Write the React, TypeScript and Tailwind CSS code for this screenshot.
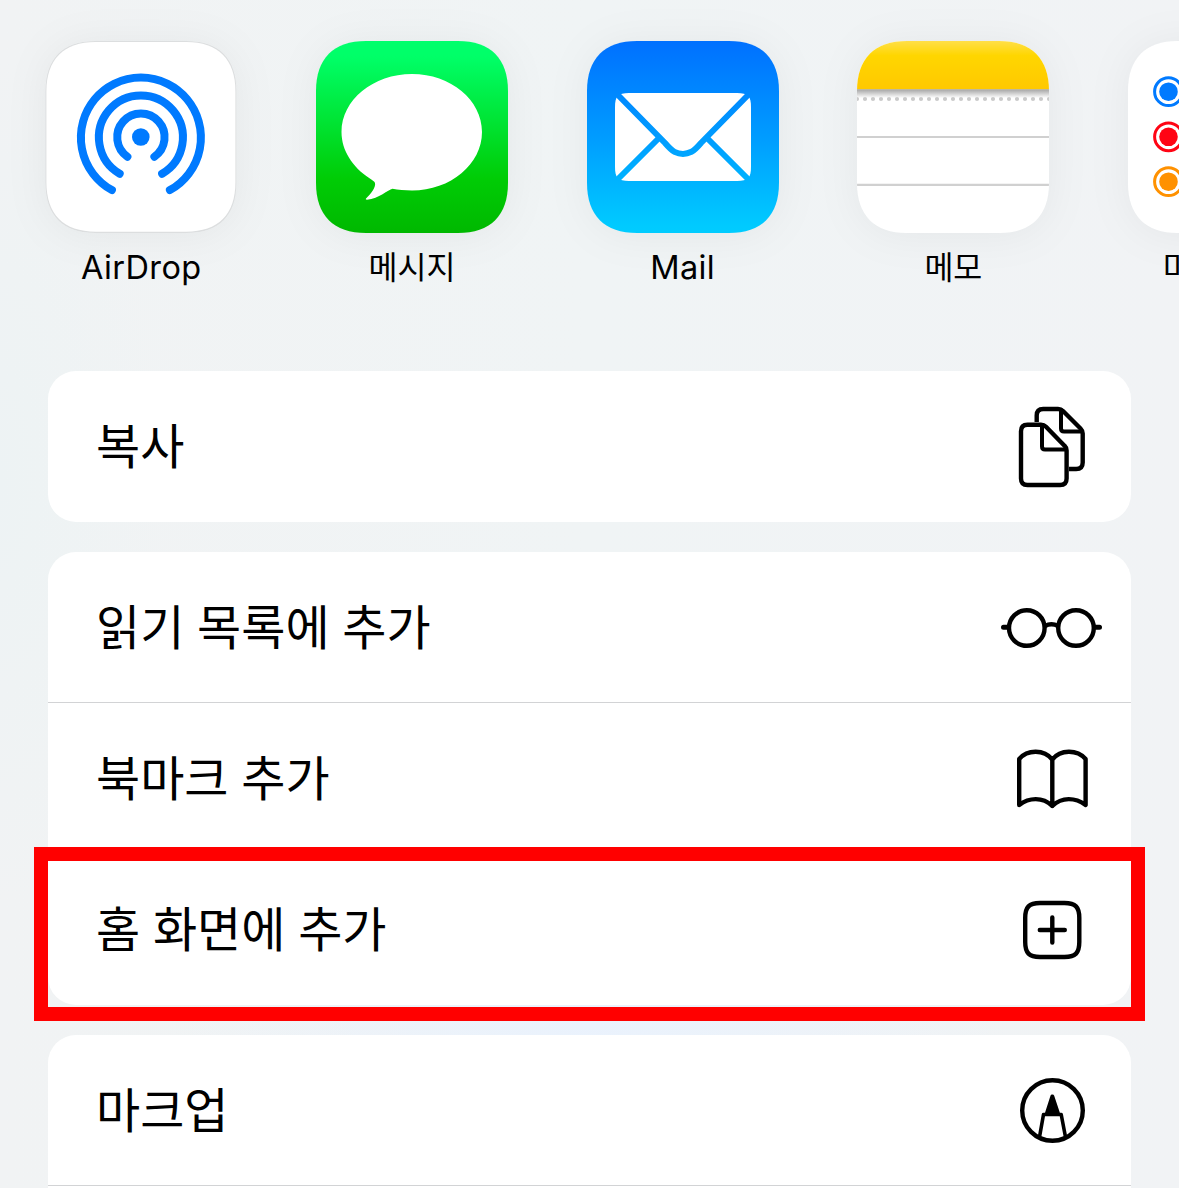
import type { ReactNode } from "react";

const TILE =
  "M0 50C0 17.500 17.500 0 50 0H142C174.500 0 192 17.500 192 50V142C192 174.500 174.500 192 142 192H50C17.500 192 0 174.500 0 142Z";

function Tile({ id, children }: { id: string; children: ReactNode }) {
  return (
    <svg
      width="192"
      height="192"
      viewBox="0 0 192 192"
      className="block overflow-visible drop-shadow-[0_2px_20px_rgba(0,0,0,0.05)]"
    >
      <defs>
        <clipPath id={`${id}-clip`}>
          <path d={TILE} />
        </clipPath>
      </defs>
      <g clipPath={`url(#${id}-clip)`}>{children}</g>
    </svg>
  );
}

function AirDropIcon() {
  return (
    <Tile id="airdrop">
      <path d={TILE} fill="#dcdedf" transform="translate(.5 0) scale(.994 1)" />
      <path d={TILE} fill="#fff" transform="translate(1.400 1) scale(.9845 .9885)" />
      <g fill="none" stroke="#007aff" strokeWidth="8" strokeLinecap="round">
        <path d="M66.900 149.100A60 60 0 1 1 124.900 149.100" />
        <path d="M74.700 132.700A42 42 0 1 1 117.100 132.700" />
        <path d="M82.400 115.700A23.700 23.700 0 1 1 109.400 115.700" />
      </g>
      <circle cx="95.800" cy="96" r="8.800" fill="#007aff" />
    </Tile>
  );
}

function MessagesIcon() {
  return (
    <Tile id="messages">
      <linearGradient id="messages-fill" x1="0" y1="0" x2="0" y2="1">
        <stop offset="0" stopColor="#00ff6c" />
        <stop offset=".08" stopColor="#00ff68" />
        <stop offset=".72" stopColor="#00cc05" />
        <stop offset="1" stopColor="#00b800" />
      </linearGradient>
      <rect width="192" height="192" fill="url(#messages-fill)" />
      <path
        d="M96 33C134.700 33 166 59 166 91S134.700 149.500 96 149.500C89 149.500 82 148.800 76.500 147.800C72 148.500 63 158 51 158.700C49.500 158.700 49.500 157.800 50.500 157C55 153 60 146 59 142C58.500 140.500 56 139 53.500 137.300C36.500 126 25.500 109.500 25.500 91C25.500 59 57.300 33 96 33Z"
        fill="#fff"
      />
    </Tile>
  );
}

function MailIcon() {
  return (
    <Tile id="mail">
      <linearGradient id="mail-fill" x1="0" y1="0" x2="0" y2="192" gradientUnits="userSpaceOnUse">
        <stop offset="0" stopColor="#0070ff" />
        <stop offset=".5" stopColor="#009cff" />
        <stop offset=".96" stopColor="#00caff" />
        <stop offset="1" stopColor="#00ccff" />
      </linearGradient>
      <rect width="192" height="192" fill="url(#mail-fill)" />
      <path
        d="M28 66C28 55 31 52 42 52H150C161 52 164 55 164 66V126C164 137 161 140 150 140H42C31 140 28 137 28 126Z"
        fill="#fff"
      />
      <g fill="none" stroke="url(#mail-fill)" strokeWidth="6">
        <path d="M28 51L78 102Q84 109 87.500 110.800Q96 115 104.500 110.800Q108 109 114 102L164 51" />
        <path d="M28 141L72.500 96.500M164 141L119.500 96.500" />
      </g>
    </Tile>
  );
}

function NotesIcon() {
  return (
    <Tile id="notes">
      <linearGradient id="notes-top" x1="0" y1="0" x2="0" y2="1">
        <stop offset="0" stopColor="#ffdf48" />
        <stop offset=".3" stopColor="#ffd600" />
        <stop offset="1" stopColor="#ffc800" />
      </linearGradient>
      <linearGradient id="notes-shade" x1="0" y1="0" x2="0" y2="1">
        <stop offset="0" stopColor="#a4a4a4" />
        <stop offset="1" stopColor="#fff" />
      </linearGradient>
      <rect width="192" height="192" fill="#fff" />
      <rect width="192" height="48.500" fill="url(#notes-top)" />
      <rect y="48.300" width="192" height="8.700" fill="url(#notes-shade)" />
      <path d="M0 58H193" stroke="#cacaca" strokeWidth="4.200" strokeLinecap="round" strokeDasharray="0 8" />
      <path d="M0 96H192M0 143.900H192" stroke="#d0d0d0" strokeWidth="2.200" />
    </Tile>
  );
}

function RemindersIcon() {
  const dots = [
    { y: 50.7, color: "#007aff" },
    { y: 95.8, color: "#ff0414" },
    { y: 140.7, color: "#ff9100" },
  ];
  return (
    <Tile id="reminders">
      <rect width="192" height="192" fill="#fff" />
      {dots.map((d) => (
        <g key={d.color}>
          <circle cx="40.500" cy={d.y} r="13.900" fill="none" stroke={d.color} strokeWidth="3" />
          <circle cx="40.500" cy={d.y} r="9.300" fill={d.color} />
        </g>
      ))}
    </Tile>
  );
}

function Glyph({ children }: { children: ReactNode }) {
  return (
    <svg
      width="100"
      height="150"
      viewBox="0 0 100 150"
      fill="none"
      stroke="#000"
      strokeWidth="4.400"
      strokeLinecap="round"
      strokeLinejoin="round"
      className="shrink-0 overflow-visible"
    >
      {children}
    </svg>
  );
}

const copyGlyph = (
  <Glyph>
    <path
      d="M34.700 51V44.500Q34.700 38 41.200 38H56Q59 38 61 40L78.500 57.500Q80.700 59.700 80.700 62.500V91.500Q80.700 98 74.200 98H67"
      strokeLinecap="butt"
    />
    <path d="M59 39V57.500Q59 60.500 62 60.500H80" strokeWidth="4" />
    <path d="M25.500 53.700H39Q42 53.700 44 55.700L62.500 74.700Q64.600 76.700 64.600 79.500V107.500Q64.600 114 58.100 114H25.500Q19 114 19 107.500V60.200Q19 53.700 25.500 53.700Z" />
    <path d="M40 55V75.500Q40 78.500 43 78.500H63.500" strokeWidth="4" />
  </Glyph>
);

const glassesGlyph = (
  <Glyph>
    <circle cx="24.800" cy="76" r="17.800" />
    <circle cx="74" cy="76" r="17.800" />
    <path d="M43 74Q49.400 70.500 56 74" />
    <path d="M1.500 75.200H6M93 75.200H97.500" strokeWidth="5" />
  </Glyph>
);

const bookGlyph = (
  <Glyph>
    <path d="M50.300 56.500C42 46.300 25.500 46.300 17.200 56V102C27 94.500 40.500 93.500 50.300 103C60 93.500 73.500 94.500 83.600 102V56C75 46.300 58.500 46.300 50.300 56.500V103" />
  </Glyph>
);

const plusGlyph = (
  <Glyph>
    <path d="M23.200 64C23.200 53 27 49 38 49H62.500C73.500 49 77.300 53 77.300 64V88C77.300 99 73.500 103 62.500 103H38C27 103 23.200 99 23.200 88Z" />
    <path d="M50.300 63.500V88.500M37.800 76H62.800" />
  </Glyph>
);

const markupGlyph = (
  <Glyph>
    <circle cx="50.500" cy="75.500" r="30.300" />
    <path d="M50.300 61.500L45 78H55.800Z" fill="#000" strokeWidth="4" />
    <path d="M37.500 102L41.500 79.500H59.200L63.500 102" strokeWidth="3.600" />
  </Glyph>
);

function AppShortcut({ icon, label, latin = false }: { icon: ReactNode; label: string; latin?: boolean }) {
  return (
    <div className="flex w-[192px] shrink-0 flex-col items-center">
      {icon}
      <span
        className={
          latin
            ? "mt-[15px] whitespace-nowrap font-['Inter','Noto_Sans_CJK_KR',sans-serif] text-[32.500px] leading-[40px] tracking-[0.400px]"
            : "mt-[12px] whitespace-nowrap font-['Noto_Sans_CJK_KR',sans-serif] text-[31.500px] leading-[40px]"
        }
      >
        {label}
      </span>
    </div>
  );
}

function ActionRow({
  label,
  glyph,
  divider = false,
  highlighted = false,
}: {
  label: string;
  glyph: ReactNode;
  divider?: boolean;
  highlighted?: boolean;
}) {
  return (
    <div
      className={
        "relative flex shrink-0 items-center justify-between pr-[29px] pl-12 " +
        (divider ? "h-[151px] border-b border-[#d2d3d5]" : "h-[150px]")
      }
    >
      <span className="mb-[7px] whitespace-nowrap font-['Noto_Sans_CJK_KR',sans-serif] text-[48px] leading-[72px] [word-spacing:2px]">
        {label}
      </span>
      {glyph}
      {highlighted && (
        <div className="pointer-events-none absolute -top-[7px] -right-[14px] -left-[14px] h-[174px] border-[14px] border-[#ff0000]" />
      )}
    </div>
  );
}

export default function App() {
  return (
    <main className="h-[1188px] w-[1179px] overflow-hidden bg-[#f1f4f5] bg-[radial-gradient(ellipse_420px_100px_at_590px_1025px,#eaf2fd,transparent),radial-gradient(ellipse_160px_420px_at_0px_480px,#edf3f4,transparent),linear-gradient(90deg,#f1f3f4,#f0f4f5_50%,#f1f3f5)] text-black">
      <section className="flex gap-[78.700px] pt-[41px] pl-[45.300px]">
        <AppShortcut icon={<AirDropIcon />} label="AirDrop" latin />
        <AppShortcut icon={<MessagesIcon />} label="메시지" />
        <AppShortcut icon={<MailIcon />} label="Mail" latin />
        <AppShortcut icon={<NotesIcon />} label="메모" />
        <AppShortcut icon={<RemindersIcon />} label="미리 알림" />
      </section>

      <section className="mx-12 mt-[83px] flex flex-col">
        <div className="rounded-[28px] bg-white pb-px">
          <ActionRow label="복사" glyph={copyGlyph} />
        </div>
        <div className="mt-[30px] rounded-[28px] bg-white pb-px">
          <ActionRow label="읽기 목록에 추가" glyph={glassesGlyph} divider />
          <ActionRow label="북마크 추가" glyph={bookGlyph} divider />
          <ActionRow label="홈 화면에 추가" glyph={plusGlyph} highlighted />
        </div>
        <div className="mt-[30px] rounded-t-[28px] bg-white">
          <ActionRow label="마크업" glyph={markupGlyph} divider />
          <div className="h-[2px]" />
        </div>
      </section>
    </main>
  );
}
